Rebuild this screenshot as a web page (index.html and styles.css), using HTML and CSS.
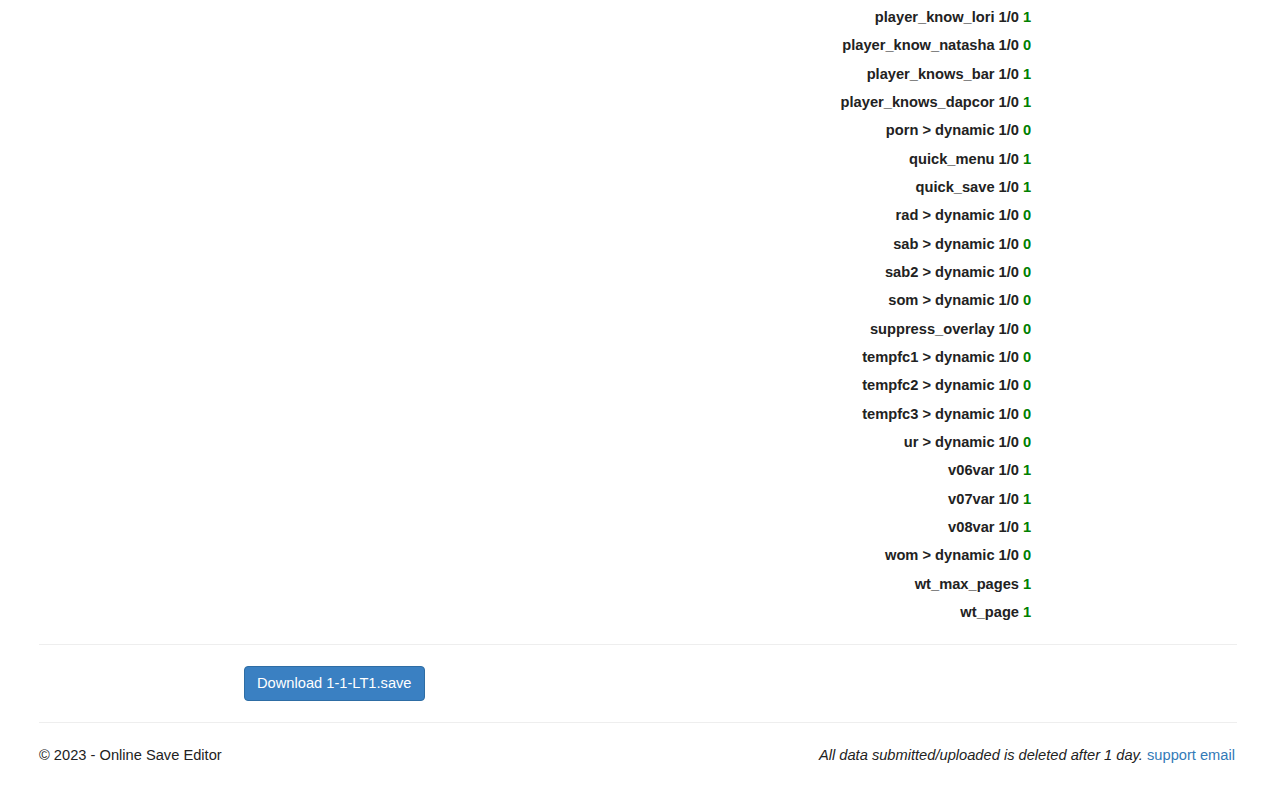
FILE: index.html
```html
<!DOCTYPE html>
<html>
<head>
<meta charset="utf-8">
<title>Online Save Editor</title>
<link rel="stylesheet" href="styles.css">
</head>
<body>
<div class="page">
  <div class="vars">
    <div class="row"><span class="name">player_know_lori 1/0</span><span class="val">1</span></div>
    <div class="row"><span class="name">player_know_natasha 1/0</span><span class="val">0</span></div>
    <div class="row"><span class="name">player_knows_bar 1/0</span><span class="val">1</span></div>
    <div class="row"><span class="name">player_knows_dapcor 1/0</span><span class="val">1</span></div>
    <div class="row"><span class="name">porn &gt; dynamic 1/0</span><span class="val">0</span></div>
    <div class="row"><span class="name">quick_menu 1/0</span><span class="val">1</span></div>
    <div class="row"><span class="name">quick_save 1/0</span><span class="val">1</span></div>
    <div class="row"><span class="name">rad &gt; dynamic 1/0</span><span class="val">0</span></div>
    <div class="row"><span class="name">sab &gt; dynamic 1/0</span><span class="val">0</span></div>
    <div class="row"><span class="name">sab2 &gt; dynamic 1/0</span><span class="val">0</span></div>
    <div class="row"><span class="name">som &gt; dynamic 1/0</span><span class="val">0</span></div>
    <div class="row"><span class="name">suppress_overlay 1/0</span><span class="val">0</span></div>
    <div class="row"><span class="name">tempfc1 &gt; dynamic 1/0</span><span class="val">0</span></div>
    <div class="row"><span class="name">tempfc2 &gt; dynamic 1/0</span><span class="val">0</span></div>
    <div class="row"><span class="name">tempfc3 &gt; dynamic 1/0</span><span class="val">0</span></div>
    <div class="row"><span class="name">ur &gt; dynamic 1/0</span><span class="val">0</span></div>
    <div class="row"><span class="name">v06var 1/0</span><span class="val">1</span></div>
    <div class="row"><span class="name">v07var 1/0</span><span class="val">1</span></div>
    <div class="row"><span class="name">v08var 1/0</span><span class="val">1</span></div>
    <div class="row"><span class="name">wom &gt; dynamic 1/0</span><span class="val">0</span></div>
    <div class="row"><span class="name">wt_max_pages</span><span class="val">1</span></div>
    <div class="row"><span class="name">wt_page</span><span class="val">1</span></div>
  </div>
  <hr class="rule rule-top">
  <div class="actions">
    <button class="btn" type="button">Download 1-1-LT1.save</button>
  </div>
  <hr class="rule rule-bottom">
  <footer class="footer">
    <span class="copy">© 2023 - Online Save Editor</span>
    <span class="note"><em>All data submitted/uploaded is deleted after 1 day.</em> <a href="#" class="link">support email</a></span>
  </footer>
</div>
</body>
</html>
```
FILE: styles.css
```css
html, body {
  margin: 0;
  padding: 0;
  background: #fff;
}
body {
  font-family: "Liberation Sans", Arial, sans-serif;
  font-size: 14.67px;
  color: #333;
}
.page {
  width: 1196px;
  margin-left: 39px;
}
.vars {
  padding-top: 3px;
}
.row {
  display: grid;
  grid-template-columns: 980px 1fr;
  column-gap: 4px;
  height: 28.33px;
  line-height: 28.33px;
  font-weight: bold;
}
.name {
  text-align: right;
  color: #222;
}
.val {
  color: #008000;
}
.rule {
  border: 0;
  border-top: 1px solid #eee;
  margin: 0;
  width: 1198px;
}
.rule-top {
  margin-top: 18px;
}
.actions {
  padding: 21px 0 21px 205px;
}
.btn {
  display: inline-block;
  font-family: "Liberation Sans", Arial, sans-serif;
  font-size: 14.67px;
  line-height: 21px;
  padding: 6px 12px;
  height: 35px;
  color: #fff;
  background: #3a80c2;
  border: 1px solid #2e6da4;
  border-radius: 4px;
  cursor: pointer;
}
.footer {
  display: flex;
  justify-content: space-between;
  padding-top: 22px;
  font-size: 14.67px;
  line-height: 21px;
  color: #222;
}
.link {
  color: #337ab7;
  text-decoration: none;
}
```
